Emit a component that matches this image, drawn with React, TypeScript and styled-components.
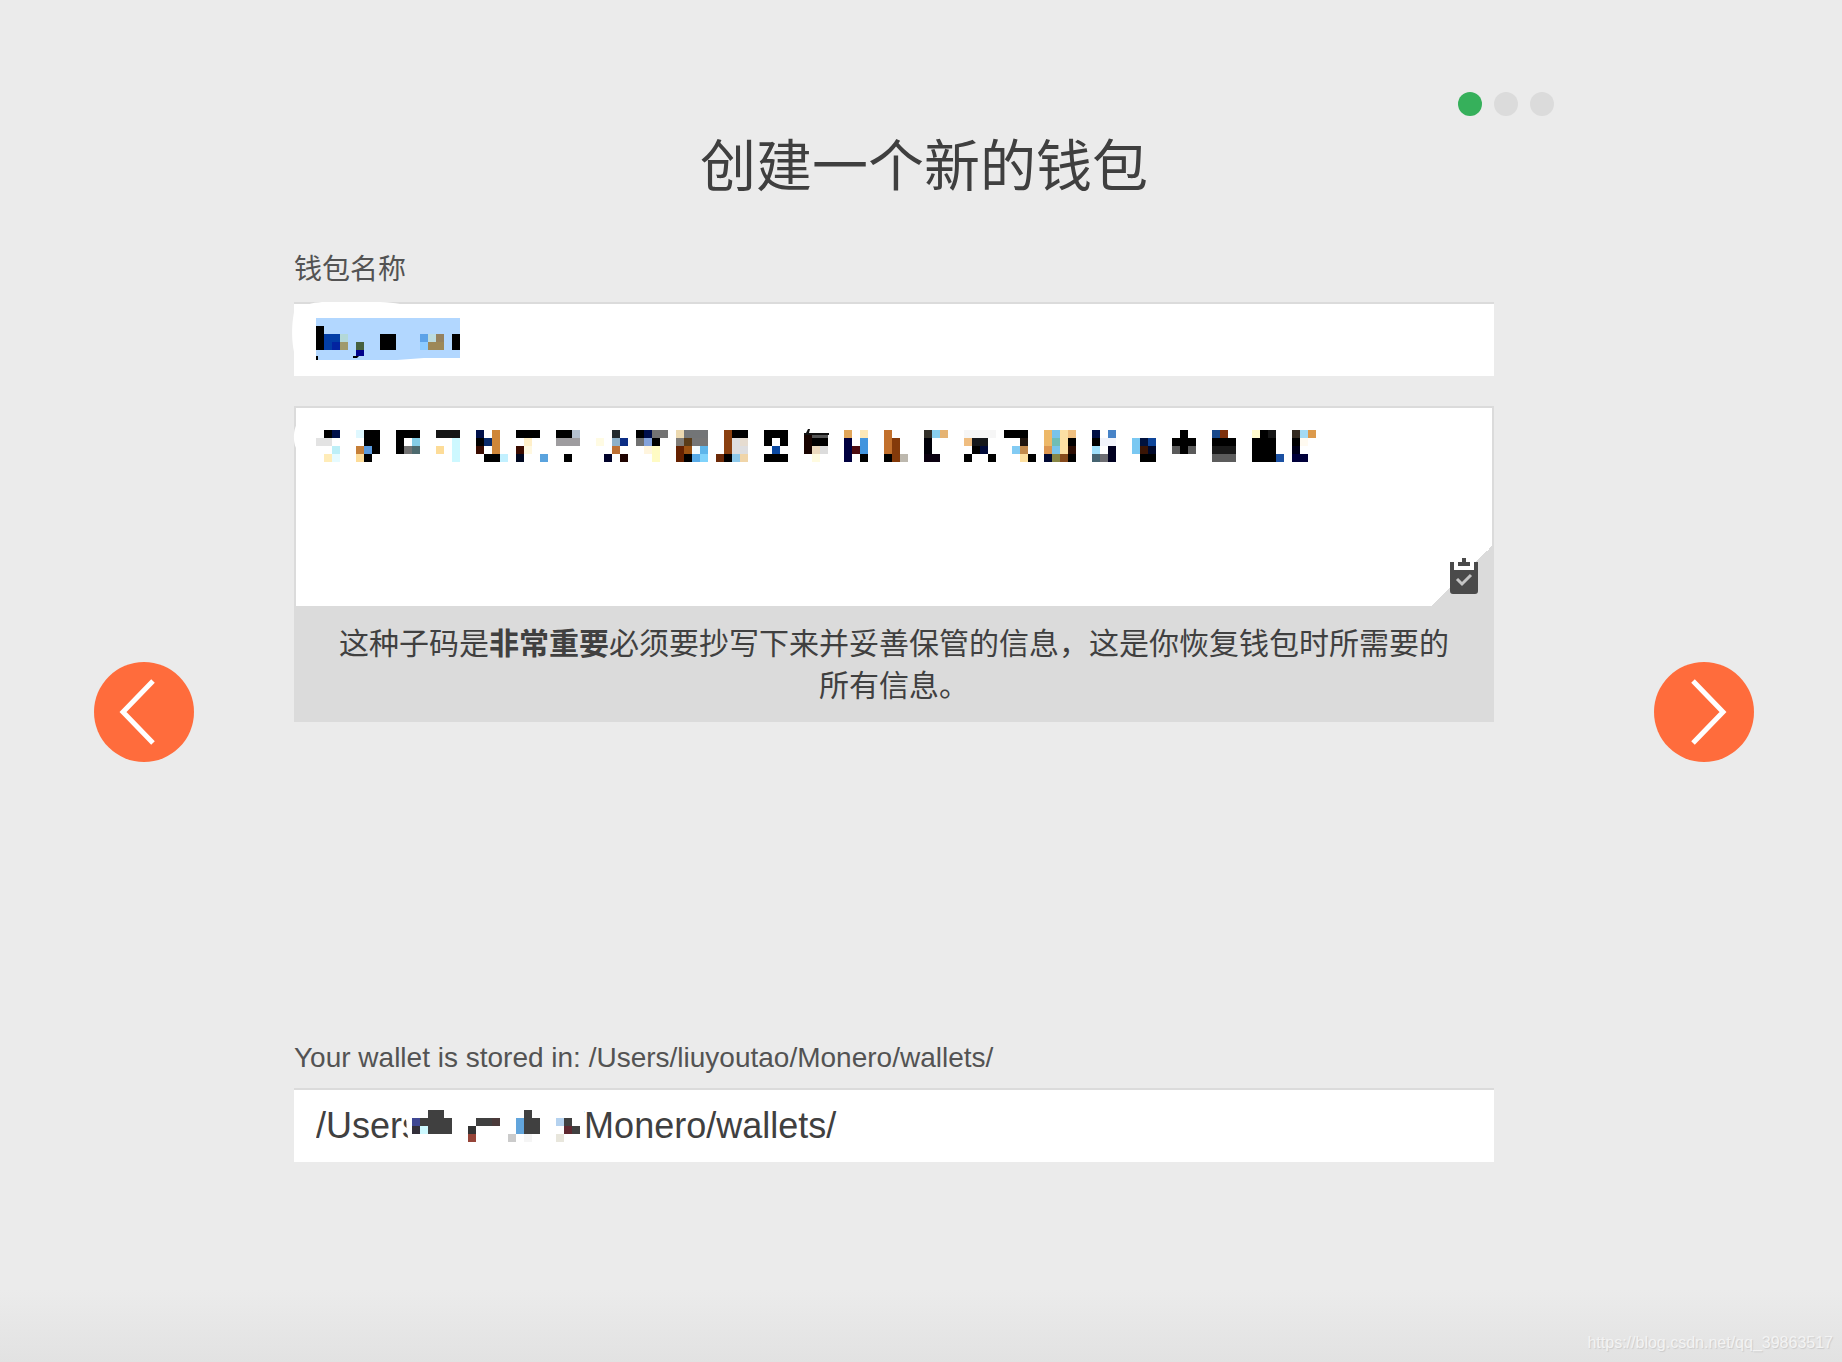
import React from "react";
import styled, { createGlobalStyle } from "styled-components";

const sans = '"Liberation Sans", Arial, "Noto Sans CJK SC", sans-serif';
const hanSans = '"Noto Sans CJK SC", "Liberation Sans", sans-serif';

const color = {
  page: "#ebebeb",
  line: "#dbdbdb",
  title: "#3f3f3f",
  label: "#535353",
  ink: "#404040",
  accent: "#ff6c3c",
  done: "#36b05b",
};

const GlobalStyle = createGlobalStyle`
  *, *::before, *::after { box-sizing: border-box; }
  body { margin: 0; background: ${color.page}; font-family: ${sans}; }
`;

const Page = styled.main`
  position: relative;
  display: grid;
  grid-template-columns: 100px minmax(0, 1fr) 100px;
  column-gap: 100px;
  align-items: center;
  min-height: 100vh;
  padding: 62px 88px 0 94px;
  background: linear-gradient(to top, #e2e2e2, ${color.page} 72px);
`;

const Column = styled.form`
  align-self: start;
  display: flex;
  flex-direction: column;
  padding: 30px 0 60px;
`;

const Steps = styled.ol`
  display: flex;
  justify-content: flex-end;
  gap: 12px;
  margin: 0;
  padding: 0;
  list-style: none;
`;

const Step = styled.li<{ $active?: boolean }>`
  width: 24px;
  height: 24px;
  border-radius: 50%;
  background: ${(p) => (p.$active ? color.done : color.line)};
`;

const Title = styled.h1`
  margin: 13px 0 54px;
  font: 400 56px/66px ${hanSans};
  text-align: center;
  color: ${color.title};
`;

const Fields = styled.div`
  display: flex;
  flex-direction: column;
  padding-right: 60px;
`;

const Label = styled.label<{ $han?: boolean }>`
  margin-bottom: ${(p) => (p.$han ? 17 : 12)}px;
  font: 400 28px/36px ${(p) => (p.$han ? hanSans : sans)};
  color: ${color.label};
`;

const Field = styled.div`
  position: relative;
  display: flex;
`;

const TextInput = styled.input`
  flex: 1;
  min-width: 0;
  height: 74px;
  padding: 0 22px;
  border: 0;
  border-top: 2px solid ${color.line};
  border-radius: 0;
  outline: 0;
  background: #fff;
  font: 400 36px ${sans};
  color: ${color.ink};
`;

const Seed = styled.section`
  margin: 30px 0 318px;
`;

const SeedText = styled.textarea`
  flex: 1;
  min-width: 0;
  height: 200px;
  padding: 20px;
  border: 2px solid ${color.line};
  border-bottom: 0;
  border-radius: 0;
  outline: 0;
  resize: none;
  background: #fff;
  font: 400 36px ${sans};
  color: ${color.ink};
`;

const Notice = styled.p`
  margin: 0;
  padding: 14px 40px 18px;
  background: ${color.line};
  font: 400 30px/42px ${hanSans};
  text-align: center;
  color: ${color.ink};
`;

const CopyButton = styled.button`
  position: absolute;
  right: 2px;
  bottom: 0;
  width: 60px;
  height: 60px;
  padding: 0;
  border: 0;
  background: linear-gradient(135deg, transparent 50%, ${color.line} 50%);
  cursor: pointer;

  svg { display: block; }
`;

const RoundButton = styled.button`
  width: 100px;
  height: 100px;
  padding: 0;
  border: 0;
  border-radius: 50%;
  background: ${color.accent};
  cursor: pointer;

  svg { display: block; }
`;

const Mask = styled.svg`
  position: absolute;
  top: 0;
  left: 0;
  overflow: visible;
  pointer-events: none;
`;

const Watermark = styled.span`
  position: absolute;
  right: 9px;
  bottom: 9px;
  font: 400 16px/20px ${sans};
  color: #f3f3f3;
  text-shadow: 1px 1px 1px #cbcbcb;
`;

// column, row, columns spanned, rows spanned, fill
type Cell = [number, number, number, number, string];

const K = "#000";
const D = "#404040";

const nameCells: Cell[] = [
  [0, 1, 1, 3, K], [1, 2, 2, 2, "#033ea6"], [2, 3, 1, 1, "#0324a0"],
  [3, 2, 1, 1, "#b3d8d8"], [3, 3, 1, 1, "#a09a6b"], [5, 3, 1, 1, "#46603f"],
  [8, 2, 2, 2, K], [13, 2, 1, 1, "#5ca2e8"], [13, 3, 1, 1, "#8ccbff"],
  [14, 2, 1, 1, "#bcdce0"], [15, 2, 1, 1, "#95815f"], [14, 3, 2, 1, "#9d8858"],
  [17, 2, 1, 2, K],
];

const seedCells: Cell[] = [
  [1, 0, 1, 1, K], [2, 0, 1, 1, "#00104a"], [0, 1, 2, 1, "#e3e3e3"],
  [2, 2, 1, 1, "#bdeff7"], [1, 3, 1, 1, "#ffecb8"], [2, 3, 1, 1, "#e6fbff"],

  [5, 0, 1, 1, "#dff8ff"], [6, 0, 2, 2, K], [7, 2, 1, 1, K], [6, 2, 1, 1, "#5a9ade"],
  [5, 2, 1, 1, "#c67f38"], [5, 3, 1, 1, "#fddc98"], [6, 3, 1, 1, K],

  [10, 0, 3, 1, K], [10, 1, 1, 2, K], [12, 1, 1, 1, "#85cde6"],
  [11, 2, 1, 1, "#737373"], [12, 2, 1, 1, "#4d6a6e"],

  [15, 0, 3, 1, "#151515"], [17, 1, 1, 3, "#cdf8ff"], [15, 2, 1, 1, "#fddc98"],

  [20, 0, 1, 1, "#00104a"], [22, 0, 1, 3, "#cf8638"], [20, 1, 1, 1, K],
  [21, 1, 1, 1, "#0a2b6b"], [20, 2, 1, 1, "#3a0b00"], [21, 3, 2, 1, K], [23, 3, 1, 1, "#c2f0ff"],

  [25, 0, 3, 1, K], [26, 1, 1, 1, "#ffefc8"], [25, 2, 1, 1, "#3a0b00"],
  [26, 2, 1, 1, "#fff8e0"], [25, 3, 1, 1, "#000820"], [28, 3, 1, 1, "#5aa3de"],

  [30, 0, 2, 1, K], [32, 0, 1, 1, "#b4c0cf"], [30, 1, 3, 1, "#9e9c9f"], [31, 3, 1, 1, K],

  [35, 1, 1, 1, "#fffbe3"], [37, 0, 1, 1, "#222a2e"], [37, 1, 1, 1, "#8db1c9"],
  [38, 1, 1, 1, "#0c2d85"], [37, 2, 1, 1, "#bd7034"], [36, 3, 1, 1, "#00022a"], [38, 3, 1, 1, "#1f0300"],

  [40, 0, 1, 1, K], [41, 0, 1, 1, "#000f4d"], [42, 0, 2, 1, "#737373"], [40, 1, 1, 1, "#707070"],
  [41, 1, 1, 1, "#83a2dc"], [42, 1, 1, 1, K], [41, 2, 1, 1, "#fff5de"], [42, 2, 1, 2, "#fffbc4"],

  [45, 0, 1, 1, "#ecd9b0"], [46, 0, 3, 1, "#737577"], [45, 1, 1, 1, "#807d78"],
  [46, 1, 1, 1, "#5a3c18"], [47, 1, 2, 1, "#767676"], [45, 2, 1, 2, "#652100"],
  [46, 2, 1, 1, "#9b5212"], [47, 2, 1, 1, "#f4fcff"], [48, 2, 1, 1, "#5db5ea"],
  [46, 3, 1, 1, K], [47, 3, 1, 1, "#58aae6"], [48, 3, 1, 1, "#80d3fb"],

  [51, 0, 1, 3, "#8a4010"], [52, 0, 2, 1, K], [52, 1, 2, 2, "#dedee0"], [53, 1, 1, 1, "#e6dcd0"],
  [50, 3, 1, 1, "#6d2a08"], [51, 3, 1, 1, K], [52, 3, 1, 1, "#8cc8ea"], [53, 3, 1, 1, "#f0d5a9"],

  [56, 0, 3, 1, K], [56, 1, 1, 1, K], [58, 1, 1, 1, K], [57, 2, 1, 1, "#0b49a2"], [56, 3, 3, 1, K],

  [61, 1, 1, 2, "#180400"], [62, 1, 2, 1, K], [62, 2, 1, 1, "#ecd9bd"],
  [63, 2, 1, 1, "#dcdcdc"], [62, 3, 1, 1, "#fffbe0"],

  [66, 0, 1, 1, "#e0a55a"], [68, 0, 1, 1, "#fde8b8"], [66, 1, 1, 3, "#00003f"],
  [68, 1, 1, 2, "#4395de"], [67, 2, 1, 1, "#4d0c10"], [68, 3, 1, 1, K],

  [71, 0, 1, 3, "#c2702c"], [72, 1, 1, 3, "#843a0a"], [71, 3, 1, 1, K], [73, 3, 1, 1, "#bdb8ae"],

  [76, 0, 1, 1, "#33302a"], [77, 0, 1, 1, "#88cff0"], [78, 0, 1, 1, "#e5b373"],
  [76, 1, 1, 2, "#000008"], [76, 3, 2, 1, "#0a0010"],

  [81, 0, 4, 1, "#f6f6f6"], [81, 1, 1, 1, "#efbd80"], [82, 1, 2, 1, "#15171a"],
  [82, 2, 1, 1, K], [83, 2, 1, 1, "#000a38"], [81, 3, 1, 1, K], [84, 3, 1, 1, K],

  [86, 0, 3, 1, K], [88, 1, 1, 1, "#20150e"], [87, 2, 1, 1, "#83cbf3"],
  [88, 2, 1, 1, "#c28a4c"], [88, 3, 1, 1, "#fddf9f"], [89, 3, 1, 1, K],

  [91, 0, 1, 2, "#edb868"], [92, 0, 1, 3, "#79c3ea"], [93, 0, 1, 3, "#fce0a4"],
  [94, 0, 1, 1, "#efc081"], [92, 1, 1, 1, "#70bdb5"], [94, 1, 1, 1, K], [91, 2, 1, 1, "#dc9651"],
  [94, 2, 1, 1, "#2c0d02"], [91, 3, 1, 1, "#000833"], [92, 3, 1, 1, "#878645"],
  [93, 3, 1, 1, "#85491b"], [94, 3, 1, 1, K],

  [97, 0, 1, 1, "#000f44"], [99, 0, 1, 1, "#4783c7"], [97, 1, 1, 1, K], [98, 1, 2, 1, "#f2f4fb"],
  [97, 2, 1, 1, "#9fe0fb"], [99, 2, 1, 2, "#000020"], [97, 3, 1, 1, "#456370"], [98, 3, 1, 1, "#6d6d72"],

  [102, 1, 1, 2, "#7ac8f2"], [103, 1, 1, 1, "#00123e"], [104, 1, 1, 1, "#0e4599"],
  [103, 2, 1, 1, "#3a1505"], [104, 2, 1, 1, "#000829"], [103, 3, 2, 1, K],

  [108, 0, 1, 1, K], [107, 1, 3, 1, K], [107, 2, 1, 1, "#5a5a5a"], [108, 2, 1, 1, K], [109, 2, 1, 1, "#5a5a5a"],

  [112, 0, 1, 1, "#17488b"], [113, 0, 1, 1, "#7e310d"], [112, 1, 3, 1, K],
  [112, 2, 3, 1, "#1a1a1a"], [112, 3, 3, 1, "#5c5c5c"],

  [117, 0, 1, 1, "#ffface"], [118, 0, 1, 1, K], [119, 0, 1, 1, "#161616"],
  [117, 1, 3, 3, K], [120, 3, 1, 1, "#1b50a2"],

  [122, 0, 1, 1, "#33291f"], [123, 0, 1, 1, "#a3daf4"], [124, 0, 1, 1, "#dc9a4c"],
  [122, 1, 1, 1, K], [123, 1, 1, 1, "#fffaf0"], [122, 2, 1, 1, "#000018"], [122, 3, 2, 1, "#00003a"],
];

const pathCells: Cell[] = [
  [2, 0, 2, 1, D], [14, 0, 1, 1, D],
  [0, 1, 1, 1, "#3f4793"], [1, 1, 4, 1, D], [8, 1, 2, 1, D], [10, 1, 1, 1, "#4a3a3a"],
  [13, 1, 1, 2, "#62a5dc"], [14, 1, 2, 2, D], [18, 1, 1, 1, "#b5d2ef"], [19, 1, 1, 1, D],
  [0, 2, 1, 1, "#332f3a"], [1, 2, 1, 1, "#cdf9ff"], [2, 2, 3, 1, D], [7, 2, 1, 1, "#333333"],
  [19, 2, 1, 1, "#5f2830"], [20, 2, 1, 1, D],
  [7, 3, 1, 1, "#964438"], [12, 3, 1, 1, "#cbcbcb"], [14, 3, 1, 1, "#f5f5f5"], [18, 3, 1, 1, "#e8e6dc"],
];

function Mosaic({ cells, x, y }: { cells: Cell[]; x: number; y: number }) {
  return (
    <g transform={`translate(${x} ${y})`} shapeRendering="crispEdges">
      {cells.map(([c, r, w, h, fill], i) => (
        <rect key={i} x={c * 8} y={r * 8} width={w * 8} height={h * 8} fill={fill} />
      ))}
    </g>
  );
}

function Arrow({ points }: { points: string }) {
  return (
    <svg width="100" height="100" viewBox="0 0 100 100" aria-hidden="true">
      <polyline points={points} fill="none" stroke="#fff" strokeWidth="5" />
    </svg>
  );
}

export default function App() {
  return (
    <>
      <GlobalStyle />
      <Page>
        <RoundButton type="button" aria-label="上一步">
          <Arrow points="59,19 29,50 59,81" />
        </RoundButton>

        <Column onSubmit={(e) => e.preventDefault()}>
          <Steps>
            <Step $active />
            <Step />
            <Step />
          </Steps>
          <Title>创建一个新的钱包</Title>

          <Fields>
            <Label $han htmlFor="wallet-name">钱包名称</Label>
            <Field>
              <TextInput id="wallet-name" type="text" />
              <Mask width="200" height="74" aria-hidden="true">
                <path d="M0 10 C10 2 18 1 28 0 H86 C94 0 100 1 106 2 V8 H4 V50 H0 C-2 40 -3 26 0 10Z" fill="#fff" />
                <path d="M22 16H166V56H130L103 58H22Z" fill="#b2d7ff" />
                <Mosaic cells={nameCells} x={22} y={16} />
                <path d="M62 48h8v6h-8z" fill="#00008b" />
                <path d="M59 54h6l-2 2h-4zM22 54h2v4h-2z" fill="#000" />
              </Mask>
            </Field>

            <Seed>
              <Field>
                <SeedText aria-label="种子码" />
                <Mask width="1100" height="100" aria-hidden="true">
                  <path d="M3 18 C-1 24 -1 36 2 42 H6 V18Z" fill="#fff" />
                  <Mosaic cells={seedCells} x={22} y={24} />
                  <path d="M510 27h2l2-4h2l-1 4h20v2h-19v2h-6z" fill="#111" />
                  <path d="M510 29h8v3h-8z" fill="#180400" />
                  <path d="M518 29h16v3h-16z" fill="#555" />
                </Mask>
                <CopyButton type="button" aria-label="复制">
                  <svg width="60" height="60" viewBox="0 0 60 60" aria-hidden="true">
                    <path d="M18 16h4v8h20v-8h4v29a3 3 0 0 1-3 3H21a3 3 0 0 1-3-3z" fill="#4a4a4a" />
                    <path d="M22 16h20v8H22z" fill="#fff" />
                    <path d="M30 12h4v4h4v4H26v-4h4z" fill="#4a4a4a" />
                    <polyline points="25,33 30,38 39,29" fill="none" stroke="#c4c4c4" strokeWidth="3" />
                  </svg>
                </CopyButton>
              </Field>
              <Notice>
                这种子码是<strong>非常重要</strong>必须要抄写下来并妥善保管的信息，这是你恢复钱包时所需要的所有信息。
              </Notice>
            </Seed>

            <Label htmlFor="wallet-path">Your wallet is stored in: /Users/liuyoutao/Monero/wallets/</Label>
            <Field>
              <TextInput id="wallet-path" type="text" defaultValue="/Users/liuyoutao/Monero/wallets/" />
              <Mask width="500" height="74" aria-hidden="true">
                <path d="M111 16H290V62H116C118 54 112 50 114 44C111 40 114 34 111 30Z" fill="#fff" />
                <Mosaic cells={pathCells} x={118} y={22} />
              </Mask>
            </Field>
          </Fields>
        </Column>

        <RoundButton type="button" aria-label="下一步">
          <Arrow points="39,19 69,50 39,81" />
        </RoundButton>
        <Watermark>https://blog.csdn.net/qq_39863517</Watermark>
      </Page>
    </>
  );
}
